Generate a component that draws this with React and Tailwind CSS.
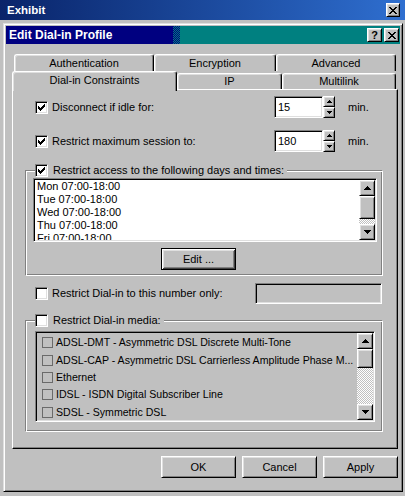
import React from "react";

const raised =
  "border border-t-white border-l-white border-r-black border-b-black shadow-[inset_1px_1px_0_#dfdfdf,inset_-1px_-1px_0_#808080] bg-[#c0c0c0]";
const sunken =
  "border border-t-[#808080] border-l-[#808080] border-r-white border-b-white shadow-[inset_1px_1px_0_#000,inset_-1px_-1px_0_#dfdfdf]";
const etched =
  "border border-t-[#808080] border-l-[#808080] border-r-white border-b-white shadow-[inset_1px_1px_0_#fff,inset_-1px_-1px_0_#808080]";
const dither =
  "bg-[image:repeating-conic-gradient(#c0c0c0_0%_25%,#ffffff_0%_50%)] bg-[length:2px_2px]";

function CheckMark() {
  return (
    <svg width="7" height="7" viewBox="0 0 7 7" shapeRendering="crispEdges">
      <path
        d="M6 0h1v1h-1z M5 1h2v1h-2z M0 2h1v1h-1z M4 2h3v1h-3z M0 3h2v1h-2z M3 3h3v1h-3z M0 4h5v1h-5z M1 5h3v1h-3z M2 6h1v1h-1z"
        fill="#000"
      />
    </svg>
  );
}

function CheckBox({ checked }) {
  return (
    <span
      className={`w-[13px] h-[13px] bg-white flex items-center justify-center shrink-0 ${sunken}`}
    >
      {checked && <CheckMark />}
    </span>
  );
}

function ArrowUp({ small }) {
  return small ? (
    <svg width="5" height="3" viewBox="0 0 5 3" shapeRendering="crispEdges">
      <path d="M2 0h1v1h1v1h1v1H0V2h1V1h1z" fill="#000" />
    </svg>
  ) : (
    <svg width="7" height="4" viewBox="0 0 7 4" shapeRendering="crispEdges">
      <path d="M3 0h1v1h1v1h1v1h1v1H0V3h1V2h1V1h1z" fill="#000" />
    </svg>
  );
}

function ArrowDown({ small }) {
  return small ? (
    <svg width="5" height="3" viewBox="0 0 5 3" shapeRendering="crispEdges">
      <path d="M0 0h5v1H4v1H3v1H2V2H1V1H0z" fill="#000" />
    </svg>
  ) : (
    <svg width="7" height="4" viewBox="0 0 7 4" shapeRendering="crispEdges">
      <path d="M0 0h7v1H6v1H5v1H4v1H3V3H2V2H1V1H0z" fill="#000" />
    </svg>
  );
}

function ScrollBtn({ dir }) {
  return (
    <div className={`w-[16px] h-[16px] shrink-0 flex items-center justify-center ${raised}`}>
      {dir === "up" ? <ArrowUp /> : <ArrowDown />}
    </div>
  );
}

function ScrollBar({ thumb }) {
  return (
    <div className="w-[16px] h-full flex flex-col shrink-0">
      <ScrollBtn dir="up" />
      <div className={`w-[16px] shrink-0 ${raised} ${thumb}`} />
      <div className={`flex-1 ${dither}`} />
      <ScrollBtn dir="down" />
    </div>
  );
}

function CloseIcon() {
  return (
    <svg width="8" height="7" viewBox="0 0 8 7" shapeRendering="crispEdges">
      <path
        d="M0 0h2v1h-2z M6 0h2v1h-2z M1 1h2v1h-2z M5 1h2v1h-2z M2 2h4v1h-4z M3 3h2v1h-2z M2 4h4v1h-4z M1 5h2v1h-2z M5 5h2v1h-2z M0 6h2v1h-2z M6 6h2v1h-2z"
        fill="#000"
      />
    </svg>
  );
}

function Spin() {
  return (
    <div className="w-[12px] h-[22px] flex flex-col shrink-0">
      <div className={`h-[11px] flex items-center justify-center ${raised}`}>
        <ArrowUp small />
      </div>
      <div className={`h-[11px] flex items-center justify-center ${raised}`}>
        <ArrowDown small />
      </div>
    </div>
  );
}

function NumberRow({ label, value, mt }) {
  return (
    <div className={`flex items-center h-[22px] ml-[22px] ${mt}`}>
      <div className="w-[239px] flex items-center">
        <CheckBox checked />
        <span className="ml-[4px]">{label}</span>
      </div>
      <div className={`w-[49px] h-[22px] bg-white flex items-center pl-[3px] ${sunken}`}>
        {value}
      </div>
      <Spin />
      <span className="ml-[13px]">min.</span>
    </div>
  );
}

function PushButton({ children, className = "" }) {
  return (
    <div className={`w-[75px] h-[22px] flex items-center justify-center ${raised} ${className}`}>
      {children}
    </div>
  );
}

const days = [
  "Mon 07:00-18:00",
  "Tue 07:00-18:00",
  "Wed 07:00-18:00",
  "Thu 07:00-18:00",
  "Fri 07:00-18:00",
];

const media = [
  "ADSL-DMT - Asymmetric DSL Discrete Multi-Tone",
  "ADSL-CAP - Asymmetric DSL Carrierless Amplitude Phase M...",
  "Ethernet",
  "IDSL - ISDN Digital Subscriber Line",
  "SDSL - Symmetric DSL",
];

const backTab =
  "h-[17px] flex items-center justify-center border-t border-l border-r border-t-white border-l-white border-r-black shadow-[inset_-1px_0_0_#808080,inset_1px_1px_0_#dfdfdf] rounded-t-[3px]";
const frontTab =
  "h-[16px] flex items-center justify-center border-t border-l border-r border-t-white border-l-white border-r-black shadow-[inset_-1px_0_0_#808080,inset_1px_1px_0_#dfdfdf] rounded-t-[3px] bg-[#c0c0c0]";

export default function App() {
  return (
    <div className="w-[405px] h-[496px] bg-[#c0c0c0] overflow-hidden flex flex-col font-['Liberation_Sans',Arial,sans-serif] text-[11px] leading-[13px] text-black select-none">
      {/* Outer window title */}
      <div className="h-[20px] shrink-0 bg-linear-to-r from-[#0a246a] to-[#2f6fd0] flex items-center justify-between pl-[7px] pr-[5px]">
        <span className="text-white font-bold text-[11.5px]">Exhibit</span>
        <div className={`w-[14px] h-[14px] flex items-center justify-center ${raised}`}>
          <CloseIcon />
        </div>
      </div>

      {/* Dialog */}
      <div className="ml-[3px] mt-[3px] w-[400px] h-[469px] shrink-0 border border-t-[#dfdfdf] border-l-[#dfdfdf] border-r-black border-b-black shadow-[inset_1px_1px_0_#fff,inset_-1px_-1px_0_#808080] p-[2px] flex flex-col">
        <div className="h-[18px] shrink-0 flex items-center justify-between pl-[3px] pr-[1px] bg-[image:linear-gradient(to_right,#000080_167px,transparent_167px,transparent_174px,#008080_174px),repeating-conic-gradient(#000080_0%_25%,#008080_0%_50%)] bg-[length:100%_100%,2px_2px]">
          <span className="text-white font-bold text-[12px]">Edit Dial-in Profile</span>
          <div className="flex gap-[2px]">
            <div className={`w-[15px] h-[14px] flex items-center justify-center font-bold text-[11px] leading-none ${raised}`}>
              ?
            </div>
            <div className={`w-[15px] h-[14px] flex items-center justify-center ${raised}`}>
              <CloseIcon />
            </div>
          </div>
        </div>

        {/* Client */}
        <div className="flex-1 flex flex-col pl-[6px] pr-[2px] pt-[10px]">
          {/* Tabs */}
          <div className="flex ml-[2px]">
            <div className={`w-[140px] ${backTab}`}>Authentication</div>
            <div className={`w-[122px] ${backTab}`}>Encryption</div>
            <div className={`w-[120px] ${backTab}`}>Advanced</div>
          </div>
          <div className="flex items-end h-[18px]">
            <div className="relative z-10 w-[165px] h-[20px] -mb-[2px] flex justify-center pt-[2px] border-t border-l border-r border-t-white border-l-white border-r-black shadow-[inset_-1px_0_0_#808080,inset_1px_1px_0_#dfdfdf] rounded-t-[3px] bg-[#c0c0c0]">
              Dial-in Constraints
            </div>
            <div className={`w-[105px] ${frontTab}`}>IP</div>
            <div className={`w-[114px] ${frontTab}`}>Multilink</div>
          </div>

          {/* Panel */}
          <div className="h-[360px] shrink-0 flex flex-col border border-t-white border-l-white border-r-black border-b-black shadow-[inset_-1px_-1px_0_#808080]">
            <NumberRow label="Disconnect if idle for:" value="15" mt="mt-[6px]" />
            <NumberRow label="Restrict maximum session to:" value="180" mt="mt-[12px]" />

            {/* Group 1 */}
            <div className={`mt-[18px] ml-[12px] w-[358px] h-[106px] p-[1px] flex flex-col ${etched}`}>
              <div className="-mt-[8px] ml-[8px] h-[13px] w-fit flex items-center bg-[#c0c0c0] pr-[3px]">
                <CheckBox checked />
                <span className="ml-[5px]">Restrict access to the following days and times:</span>
              </div>
              <div className={`mt-[1px] ml-[6px] w-[344px] h-[64px] bg-white p-[1px] flex ${sunken}`}>
                <div className="flex-1 overflow-hidden pl-[2px]">
                  {days.map((d) => (
                    <div key={d} className="h-[13px] leading-[13px] whitespace-nowrap">
                      {d}
                    </div>
                  ))}
                </div>
                <ScrollBar thumb="h-[23px]" />
              </div>
              <div className="mt-[6px] ml-[134px] w-[75px] h-[22px] flex items-center justify-center border border-black shadow-[inset_1px_1px_0_#fff,inset_-1px_-1px_0_#404040,inset_2px_2px_0_#dfdfdf,inset_-2px_-2px_0_#808080]">
                Edit ...
              </div>
            </div>

            {/* Number only */}
            <div className="mt-[7px] ml-[22px] h-[21px] flex items-center">
              <div className="w-[220px] flex items-center">
                <CheckBox />
                <span className="ml-[4px]">Restrict Dial-in to this number only:</span>
              </div>
              <div className={`w-[127px] h-[21px] bg-[#c0c0c0] ${sunken}`} />
            </div>

            {/* Group 2 */}
            <div className={`mt-[16px] ml-[12px] w-[358px] h-[112px] p-[1px] flex flex-col ${etched}`}>
              <div className="-mt-[8px] ml-[8px] h-[13px] w-fit flex items-center bg-[#c0c0c0] pr-[3px]">
                <CheckBox />
                <span className="ml-[5px]">Restrict Dial-in media:</span>
              </div>
              <div className={`mt-[4px] ml-[8px] w-[340px] h-[91px] bg-[#c0c0c0] p-[1px] flex ${sunken}`}>
                <div className="flex-1 overflow-hidden pt-[1px] text-[10.6px]">
                  {media.map((m) => (
                    <div key={m} className="h-[17.4px] flex items-center pl-[5px] whitespace-nowrap">
                      <span className="w-[11px] h-[11px] border border-[#6a6a6a] shrink-0" />
                      <span className="ml-[3px]">{m}</span>
                    </div>
                  ))}
                </div>
                <ScrollBar thumb="h-[19px]" />
              </div>
            </div>
          </div>

          {/* Buttons */}
          <div className="mt-[7px] flex justify-end gap-[6px]">
            <PushButton>OK</PushButton>
            <PushButton>Cancel</PushButton>
            <PushButton>Apply</PushButton>
          </div>
        </div>
      </div>
    </div>
  );
}
